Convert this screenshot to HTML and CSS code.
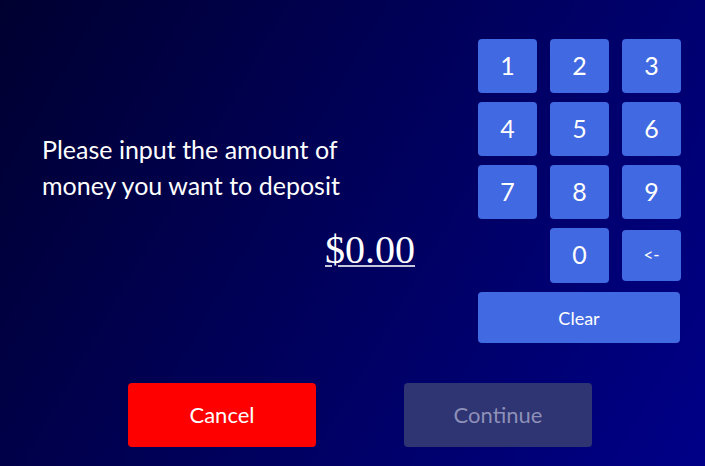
FILE: index.html
```html
<!DOCTYPE html>
<html>
<head>
<meta charset="utf-8">
<link rel="stylesheet" href="styles.css">
</head>
<body>
<div class="screen">
  <div class="top">
    <div class="prompt">
      <p class="question">Please input the amount of<br>money you want to deposit</p>
      <div class="amount"><span class="amount-value">$0.00</span></div>
    </div>
    <div class="keypad">
      <button class="key">1</button>
      <button class="key">2</button>
      <button class="key">3</button>
      <button class="key">4</button>
      <button class="key">5</button>
      <button class="key">6</button>
      <button class="key">7</button>
      <button class="key">8</button>
      <button class="key">9</button>
      <button class="key key-zero">0</button>
      <button class="key key-back">&lt;-</button>
      <button class="key key-clear">Clear</button>
    </div>
  </div>
  <div class="actions">
    <button class="action action-cancel">Cancel</button>
    <button class="action action-continue" disabled>Continue</button>
  </div>
</div>
</body>
</html>
```

FILE: styles.css
```css
html, body {
  margin: 0;
  padding: 0;
}
body {
  width: 705px;
  height: 466px;
  overflow: hidden;
  font-family: "Lato", "Open Sans", sans-serif;
}
.screen {
  width: 705px;
  height: 466px;
  box-sizing: border-box;
  background: linear-gradient(120deg, #000030 0%, #000058 45%, #000088 100%);
  display: flex;
  flex-direction: column;
}
.top {
  display: flex;
  flex-direction: row;
}
.prompt {
  width: 373px;
  margin-left: 42px;
  padding-top: 131px;
  display: flex;
  flex-direction: column;
}
.question {
  margin: 0;
  color: #ffffff;
  font-size: 25px;
  line-height: 36px;
}
.amount {
  text-align: right;
  margin-top: 27px;
}
.amount-value {
  color: #ffffff;
  font-family: "Liberation Serif", serif;
  font-size: 40px;
  line-height: 40px;
  text-decoration: underline;
  text-decoration-thickness: 2px;
  text-decoration-color: #c8c8dc;
  text-underline-offset: 2px;
}
.keypad {
  margin-left: auto;
  margin-right: 24px;
  margin-top: 39px;
  display: grid;
  grid-template-columns: 59px 59px 59px;
  grid-template-rows: 54px 54px 54px 55px 51px;
  column-gap: 13px;
  row-gap: 9px;
}
.key {
  border: none;
  border-radius: 4px;
  background: #4169e1;
  color: #ffffff;
  font-family: "Lato", "Open Sans", sans-serif;
  font-size: 25px;
  padding: 0 0 3px 0;
}
.key-zero {
  grid-column: 2;
}
.key-back {
  grid-column: 3;
  font-size: 17px;
  height: 51px;
  align-self: center;
}
.key-clear {
  grid-column: 1 / span 3;
  width: 202px;
  font-size: 18px;
  padding: 0;
}
.actions {
  display: flex;
  flex-direction: row;
  padding-top: 40px;
  padding-left: 128px;
  column-gap: 88px;
}
.action {
  width: 188px;
  height: 64px;
  border: none;
  border-radius: 4px;
  font-family: "Lato", "Open Sans", sans-serif;
  font-size: 22px;
  padding: 0 0 2px 0;
}
.action-cancel {
  background: #ff0000;
  color: #ffffff;
}
.action-continue {
  background: #2f3472;
  color: #8d90b8;
}
```
